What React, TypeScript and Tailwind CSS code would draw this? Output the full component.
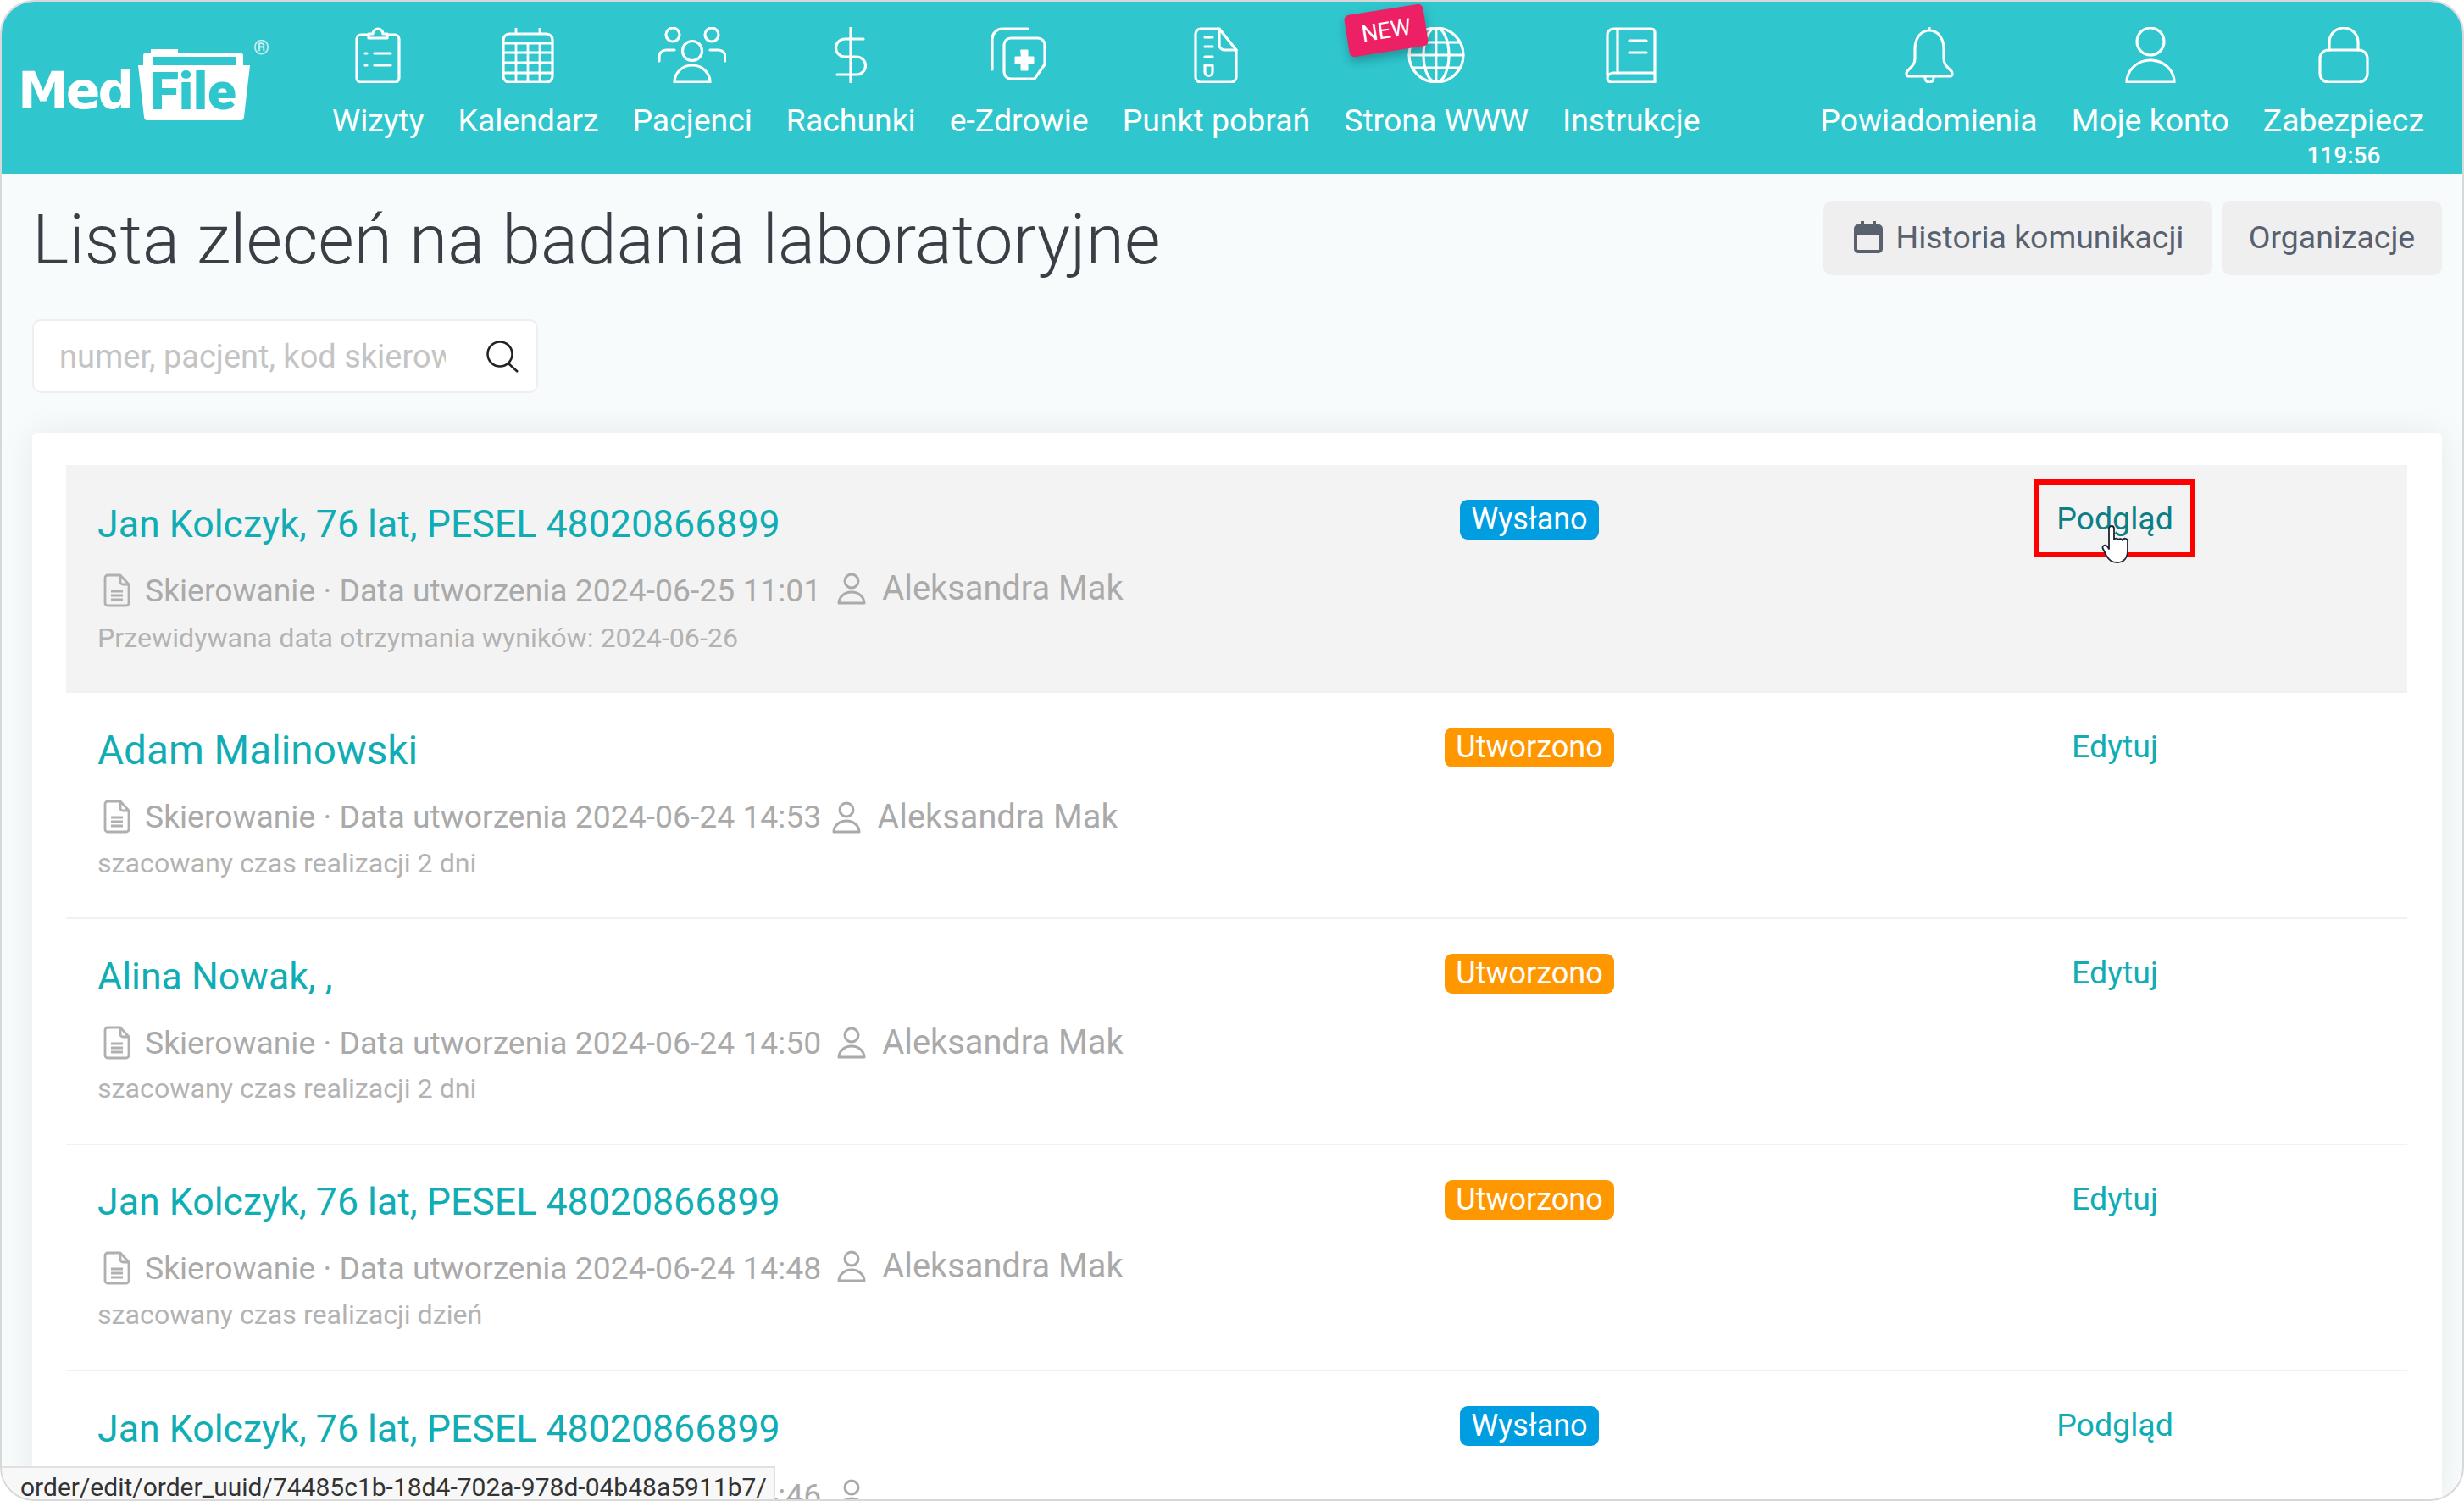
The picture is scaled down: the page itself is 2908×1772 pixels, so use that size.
import React from 'react';

type NavItem = { label: string; icon: React.ReactNode; extra?: React.ReactNode };

const Icon: React.FC<{ children: React.ReactNode }> = ({ children }) => (
  <svg viewBox="0 0 80 66" className="h-[66px] w-[80px]" fill="none" stroke="#fff" strokeWidth="3.2" strokeLinecap="round" strokeLinejoin="round">
    {children}
  </svg>
);

const ClipboardIcon = () => <Icon>
  <path d="M28 9h-8a5 5 0 0 0-5 5v46a5 5 0 0 0 5 5h40a5 5 0 0 0 5-5V14a5 5 0 0 0-5-5h-8" />
  <path d="M29 13h22V8h-5a6 6 0 0 0-12 0h-5z" />
  <path d="M36 31h19M36 45h19M25 31h2M25 45h2" />
</Icon>;

const CalendarIcon = () => <Icon>
  <rect x="11" y="8" width="58" height="57" rx="7" />
  <path d="M26 1v7M54 1v7M11 19h58M11 30h58M11 42h58M11 54h58M26 19v46M40 19v46M54 19v46" strokeWidth="2.8" strokeLinecap="butt" />
</Icon>;

const PeopleIcon = () => <Icon>
  <circle cx="17" cy="9" r="8" />
  <circle cx="63" cy="9" r="8" />
  <circle cx="40" cy="28" r="11.5" />
  <path d="M19 65a21 20 0 0 1 42 0z" />
  <path d="M1 40v-5a8 8 0 0 1 8-8h10M79 40v-5a8 8 0 0 0-8-8H61" />
</Icon>;

const DollarIcon = () => <Icon>
  <path d="M40 1v64M55 14H33a10.5 10.5 0 0 0 0 21h14a10.5 10.5 0 0 1 0 21H24" />
</Icon>;

const HealthIcon = () => <Icon>
  <path d="M8 50V14A12 12 0 0 1 20 2h30" />
  <path d="M30 13h32a8 8 0 0 1 8 8v23L58 61H30a8 8 0 0 1-8-8V21a8 8 0 0 1 8-8z" />
  <path d="M42 27h8v8h7v8h-7v8h-8v-8h-7v-8h7z" fill="#fff" strokeWidth="1" />
</Icon>;

const LabIcon = () => <Icon>
  <path d="M22 2h22l20 25v32a6 6 0 0 1-6 6H22a6 6 0 0 1-6-6V8a6 6 0 0 1 6-6z" />
  <path d="M44 2v19a6 6 0 0 0 6 6h14" />
  <path d="M27 12h9M27 23h9M27 35h9M27 45h9v8a4.500 4.500 0 0 1-9 0z" />
</Icon>;

const GlobeIcon = () => <Icon>
  <circle cx="40" cy="33" r="32" />
  <ellipse cx="40" cy="33" rx="15" ry="32" />
  <path d="M40 1v64M12 18h56M12 48h56M8 33h64" strokeWidth="2.8" />
</Icon>;

const BookIcon = () => <Icon>
  <path d="M12 57V9a7 7 0 0 1 7-7h45a4 4 0 0 1 4 4v48H19a7 7 0 0 0-7 6a5 5 0 0 0 5 5h51V54" />
  <path d="M24 2v52M38 16h20M38 30h20" />
</Icon>;

const BellIcon = () => <Icon>
  <path d="M40 1v3M40 4c-10 0-17 9-17 22v11c0 7-4 10-9 15-2 3-1 6 2 6h48c3 0 4-3 2-6-5-5-9-8-9-15V26c0-13-7-22-17-22z" />
  <path d="M35 60a5 5 0 0 0 10 0" />
</Icon>;

const UserIcon = () => <Icon>
  <ellipse cx="40" cy="17" rx="16" ry="16" />
  <path d="M12 65a28 26 0 0 1 56 0z" />
</Icon>;

const LockIcon = () => <Icon>
  <path d="M23 27V18a17 17 0 0 1 34 0v9" />
  <rect x="12" y="27" width="56" height="38" rx="10" />
</Icon>;

const leftNav: NavItem[] = [
  { label: 'Wizyty', icon: <ClipboardIcon /> },
  { label: 'Kalendarz', icon: <CalendarIcon /> },
  { label: 'Pacjenci', icon: <PeopleIcon /> },
  { label: 'Rachunki', icon: <DollarIcon /> },
  { label: 'e-Zdrowie', icon: <HealthIcon /> },
  { label: 'Punkt pobrań', icon: <LabIcon /> },
  {
    label: 'Strona WWW',
    icon: <GlobeIcon />,
    extra: <span className="absolute left-[23px] top-[9px] flex h-[50px] w-[94px] -rotate-[9deg] items-center justify-center rounded-[6px] bg-[#ee2065] text-[27px] text-white shadow-[0_6px_12px_rgba(0,0,0,0.25)]">NEW</span>,
  },
  { label: 'Instrukcje', icon: <BookIcon /> },
];

const rightNav: NavItem[] = [
  { label: 'Powiadomienia', icon: <BellIcon /> },
  { label: 'Moje konto', icon: <UserIcon /> },
  { label: 'Zabezpiecz', icon: <LockIcon />, extra: <span className="absolute left-0 right-0 top-[167px] text-center text-[28px] font-medium leading-[30px]">119:56</span> },
];

const NavLink: React.FC<{ item: NavItem }> = ({ item }) => (
  <a className="relative flex flex-col items-center px-5 pt-[30px] text-white">
    {item.icon}
    <span className="mt-[24px] whitespace-nowrap text-[37.4px] leading-[40px]">{item.label}</span>
    {item.extra}
  </a>
);

const Logo = () => (
  <div className="relative h-full w-[370px] shrink-0">
    <span className="absolute left-[19px] top-[66px] font-['DejaVu_Sans',sans-serif] text-[60px] font-bold leading-[78px] tracking-[-3px] text-white">Med</span>
    <svg viewBox="0 0 140 90" className="absolute left-[160px] top-[54px] h-[90px] w-[140px]" fill="#fff">
      <path d="M7 21V9a2 2 0 0 1 2-2h7V2h32v5h75a2 2 0 0 1 2 2v12h-8V11H18v10z" />
      <path d="M1 21h132l-7 61a4 4 0 0 1-4 4H12a4 4 0 0 1-4-4z" />
    </svg>
    <span className="absolute left-[175px] top-[67px] text-[62px] font-black leading-[78px] text-[#2fc6ce]">File</span>
    <span className="absolute left-[297px] top-[42px] text-[24px] leading-[24px] text-white/80">®</span>
  </div>
);

const DocIcon = () => (
  <svg viewBox="0 0 32 40" className="h-[40px] w-[32px] shrink-0" fill="none" stroke="#b0b0b0" strokeWidth="2.800" strokeLinejoin="round">
    <path d="M5 2h15l10 11v22a3 3 0 0 1-3 3H5a3 3 0 0 1-3-3V5a3 3 0 0 1 3-3z" />
    <path d="M20 2v8a3 3 0 0 0 3 3h7M9 21h14M9 26h14M9 31h14" />
  </svg>
);

const PersonIcon = () => (
  <svg viewBox="0 0 34 38" className="h-[38px] w-[34px] shrink-0" fill="none" stroke="#aaaaaa" strokeWidth="3">
    <circle cx="17" cy="10" r="8" />
    <path d="M2 36a15 13 0 0 1 30 0z" strokeLinejoin="round" />
  </svg>
);

const Cursor = () => (
  <svg viewBox="0 0 34 46" className="absolute left-[53px] top-[30px] h-[46px] w-[34px]" fill="#fff" stroke="#1b2233" strokeWidth="1.800" strokeLinejoin="round">
    <path d="M9 4a3 3 0 0 1 6 0v13a3 3 0 0 1 5 0 3 3 0 0 1 5 1 3 3 0 0 1 6 2v10c0 8-4 14-12 14-7 0-10-3-13-8L2 28c-2-3 2-6 5-3l2 3z" />
  </svg>
);

type Order = {
  name: string; nameClass: string; status: 'Wysłano' | 'Utworzono'; date: string; note: string; noteClass: string; action: string;
  selected?: boolean; rowClass: string; doctor: string; doctorClass: string;
};

const orders: Order[] = [
  { name: 'Jan Kolczyk, 76 lat, PESEL 48020866899', nameClass: 'text-[44.7px]', status: 'Wysłano', date: '2024-06-25 11:01', note: 'Przewidywana data otrzymania wyników: 2024-06-26', noteClass: 'mt-[18px]', action: 'Podgląd', selected: true, rowClass: 'h-[269px]', doctor: 'Aleksandra Mak', doctorClass: 'ml-[3px] mt-[-4px]' },
  { name: 'Adam Malinowski', nameClass: 'mt-[-2px] mb-[2px] text-[47.7px]', status: 'Utworzono', date: '2024-06-24 14:53', note: 'szacowany czas realizacji 2 dni', noteClass: 'mt-[17px]', action: 'Edytuj', rowClass: 'h-[267px]', doctor: 'Aleksandra Mak', doctorClass: 'ml-[-3px] mt-[1px]' },
  { name: 'Alina Nowak, ,', nameClass: 'mt-[-2px] mb-[3px] text-[44.7px]', status: 'Utworzono', date: '2024-06-24 14:50', note: 'szacowany czas realizacji 2 dni', noteClass: 'mt-[16px]', action: 'Edytuj', rowClass: 'h-[267px]', doctor: 'Aleksandra Mak', doctorClass: 'ml-[3px]' },
  { name: 'Jan Kolczyk, 76 lat, PESEL 48020866899', nameClass: 'mt-[-3px] mb-[4px] text-[44.7px]', status: 'Utworzono', date: '2024-06-24 14:48', note: 'szacowany czas realizacji dzień', noteClass: 'mt-[17px]', action: 'Edytuj', rowClass: 'h-[267px]', doctor: 'Aleksandra Mak', doctorClass: 'ml-[3px] mt-[-4px]' },
  { name: 'Jan Kolczyk, 76 lat, PESEL 48020866899', nameClass: 'mt-[-2px] mb-[2px] text-[44.7px]', status: 'Wysłano', date: '2024-06-24 14:46', note: 'szacowany czas realizacji dzień', noteClass: 'mt-[16px]', action: 'Podgląd', rowClass: 'h-[267px]', doctor: '', doctorClass: 'ml-[3px]' },
];

const OrderRow: React.FC<{ order: Order }> = ({ order }) => (
  <div className={`flex shrink-0 items-start border-b-2 border-[#f1f1f1] pl-[37px] ${order.rowClass} ${order.selected ? 'bg-[#f3f3f3]' : ''}`}>
    <div className="w-[1463px] shrink-0 pt-[43px]">
      <a className={`block whitespace-nowrap leading-[54px] text-[#11adb5] ${order.nameClass}`}>{order.name}</a>
      <div className="mt-[32px] flex h-[38px] items-center pl-[7px] text-[37.3px] leading-[38px] text-[#aaaaaa]">
        <DocIcon />
        <span className="ml-[17px] whitespace-nowrap">Skierowanie · Data utworzenia {order.date}</span>
        <span className={`flex items-center ${order.doctorClass}`}>
          <span className="ml-[16px] flex"><PersonIcon /></span>
          <span className="ml-[19px] whitespace-nowrap text-[39.8px]">{order.doctor}</span>
        </span>
      </div>
      <p className={`whitespace-nowrap text-[32.2px] leading-[38px] text-[#b3b3b3] ${order.noteClass}`}>{order.note}</p>
    </div>
    <div className="flex w-[454px] shrink-0 justify-center pt-[41px]">
      <span className={`flex h-[47px] items-center rounded-[9px] px-[13px] text-[36px] leading-[47px] text-white ${order.status === 'Wysłano' ? 'bg-[#009de0]' : 'bg-[#ff9800]'}`}>{order.status}</span>
    </div>
    <div className={`relative ml-[268px] flex w-[392px] shrink-0 justify-center pt-[41px] text-[37.5px] leading-[44px] ${order.selected ? 'text-[#0c7f86]' : 'text-[#11adb5]'}`}>
      <a className="relative">
        {order.action}
        {order.selected && <>
          <span className="absolute left-[-26px] top-[-24px] h-[92px] w-[190px] border-[6px] border-[#ff0000]" />
          <Cursor />
        </>}
      </a>
    </div>
  </div>
);

export default function App() {
  return (
    <div className="h-[1772px] w-[2908px] bg-white font-['Roboto',sans-serif]">
      <div className="relative flex h-full flex-col overflow-hidden rounded-[40px] border-2 border-[#d8d8d8] bg-[#f8fbfc]">
        <header className="flex h-[203px] shrink-0 items-start bg-[#2fc6ce] pr-[25px]">
          <Logo />
          <nav className="flex">{leftNav.map((item) => <NavLink key={item.label} item={item} />)}</nav>
          <nav className="ml-auto flex">{rightNav.map((item) => <NavLink key={item.label} item={item} />)}</nav>
        </header>

        <main className="flex min-h-0 flex-1 flex-col pl-[36px] pr-[24px]">
          <div className="mt-[32px] flex h-[88px] shrink-0 items-center justify-between">
            <h1 className="pt-[3px] text-[82.2px] font-light leading-[92px] text-[#3a3f45]">Lista zleceń na badania laboratoryjne</h1>
            <div className="flex gap-[11px]">
              <button className="flex h-[88px] w-[459px] items-center justify-center gap-[16px] rounded-[10px] bg-[#efefef] pb-[2px] pl-[2px] text-[37.4px] text-[#59606e]">
                <svg viewBox="0 0 34 38" className="h-[38px] w-[34px]" fill="none" stroke="#59606e" strokeWidth="4">
                  <rect x="2" y="6" width="30" height="30" rx="3" />
                  <path d="M2 12h30" strokeWidth="8" />
                  <path d="M10 0v6M24 0v6" />
                </svg>
                Historia komunikacji
              </button>
              <button className="h-[88px] w-[260px] rounded-[10px] bg-[#efefef] pb-[2px] text-[37.4px] text-[#59606e]">Organizacje</button>
            </div>
          </div>

          <div className="mt-[52px] flex h-[87px] w-[597px] shrink-0 items-center rounded-[10px] border-2 border-[#eceff1] bg-white pl-[30px] pr-[20px]">
            <input readOnly placeholder="numer, pacjent, kod skierowania" className="w-[456px] bg-transparent pt-[2px] text-[38px] outline-none placeholder:text-[#c4c4c4]" />
            <svg viewBox="0 0 40 40" className="ml-auto h-[40px] w-[40px]" fill="none" stroke="#222" strokeWidth="2.500">
              <circle cx="17" cy="17" r="14.5" />
              <path d="M27 28l11 10" />
            </svg>
          </div>

          <section className="mt-[47px] flex min-h-0 flex-1 flex-col overflow-hidden rounded-t-[6px] bg-white pl-[40px] pr-[41px] pt-[38px] shadow-[0_0_40px_rgba(0,0,0,0.07)]">
            {orders.map((order, i) => <OrderRow key={i} order={order} />)}
          </section>
        </main>

        <div className="absolute bottom-0 left-0 h-[39px] w-[913px] overflow-hidden whitespace-nowrap border-r-2 border-t-2 border-[#e0e0e0] bg-[#f8f8f8] pl-[22px] text-[30px] leading-[46px] text-[#333]">
          order/edit/order_uuid/74485c1b-18d4-702a-978d-04b48a5911b7/
        </div>
      </div>
    </div>
  );
}
